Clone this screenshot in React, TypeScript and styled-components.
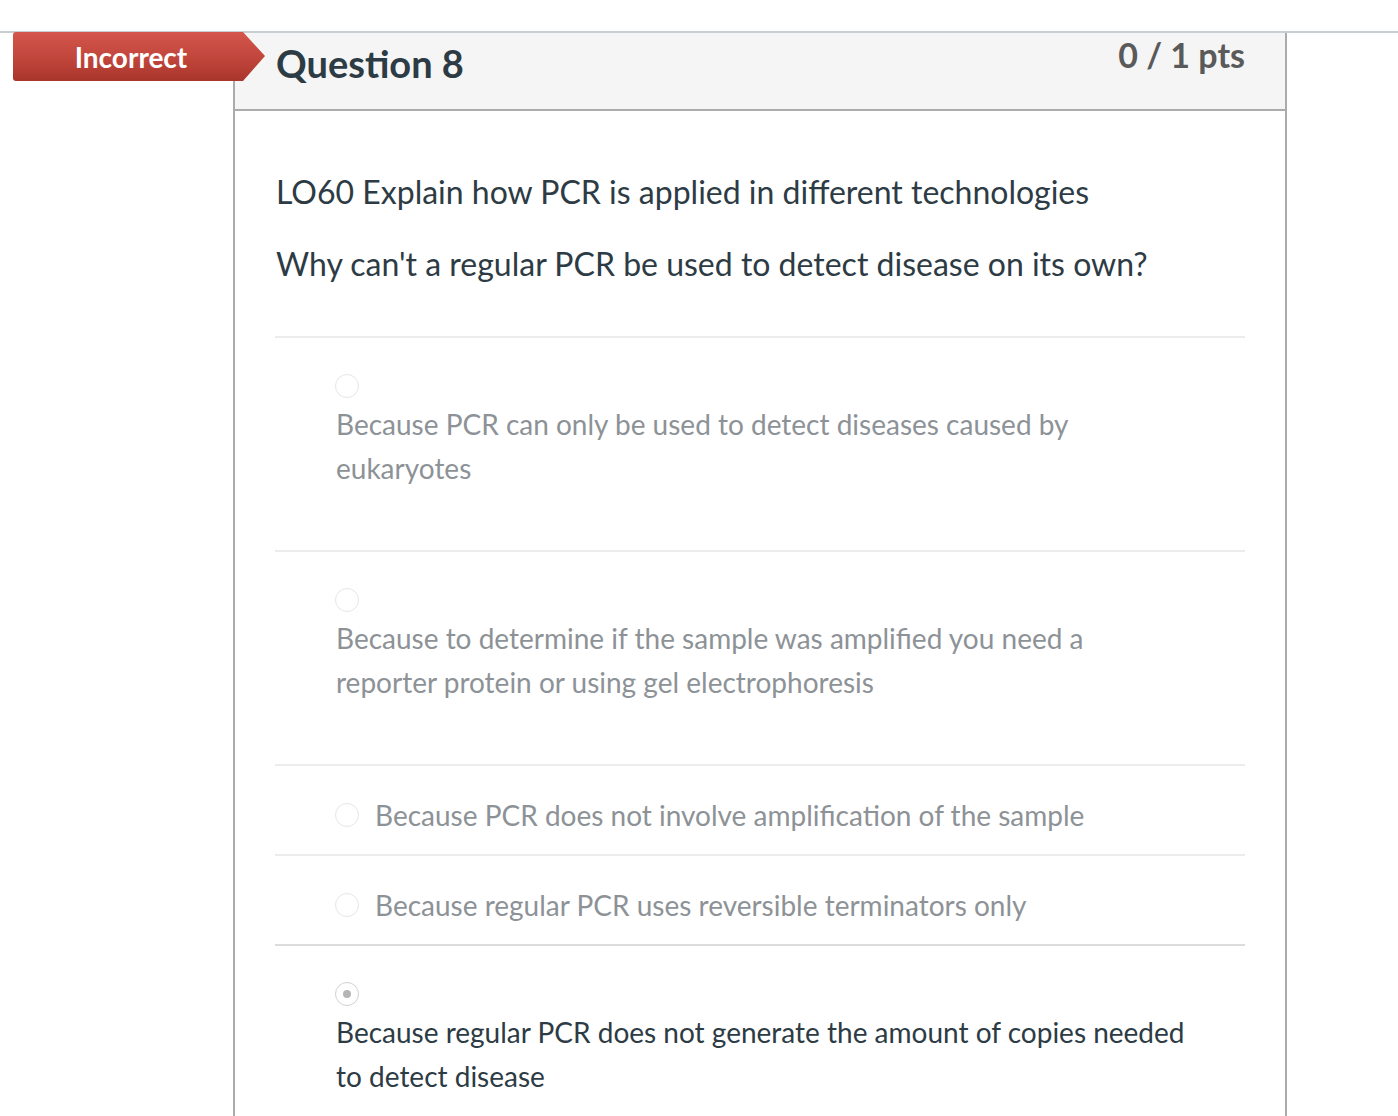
import React from "react";
import styled, { createGlobalStyle } from "styled-components";

const GlobalStyle = createGlobalStyle`
    html, body {
        margin: 0;
        padding: 0;
        background: #ffffff;
        font-family: Lato, "Open Sans", "Liberation Sans", sans-serif;
        overflow: hidden;
    }
`;

type Answer = {
    text: string;
    stacked: boolean;
    selected?: boolean;
    strong?: boolean;
};

const answers: Answer[] = [
    {
        text: "Because PCR can only be used to detect diseases caused by eukaryotes",
        stacked: true,
    },
    {
        text: "Because to determine if the sample was amplified you need a reporter protein or using gel electrophoresis",
        stacked: true,
    },
    { text: "Because PCR does not involve amplification of the sample", stacked: false },
    { text: "Because regular PCR uses reversible terminators only", stacked: false, strong: true },
    {
        text: "Because regular PCR does not generate the amount of copies needed to detect disease",
        stacked: true,
        selected: true,
    },
];

export default function App() {
    return (
        <>
            <GlobalStyle />
            <Page>
                <TopRule />
                <QuestionRow>
                    <Gutter>
                        <Badge>Incorrect</Badge>
                    </Gutter>
                    <Card>
                        <Header>
                            <Title>Question 8</Title>
                            <Points>0 / 1 pts</Points>
                        </Header>
                        <Body>
                            <Prompt>LO60 Explain how PCR is applied in different technologies</Prompt>
                            <Prompt>Why can't a regular PCR be used to detect disease on its own?</Prompt>
                            <AnswerList>
                                {answers.map((a, i) => (
                                    <AnswerItem key={i} $stacked={a.stacked} $strong={a.strong}>
                                        <Radio $selected={a.selected} />
                                        <AnswerText $stacked={a.stacked} $selected={a.selected}>
                                            {a.text}
                                        </AnswerText>
                                    </AnswerItem>
                                ))}
                            </AnswerList>
                        </Body>
                    </Card>
                </QuestionRow>
            </Page>
        </>
    );
}

const Page = styled.div`
    padding-top: 31px;
    min-height: 1116px;
    box-sizing: border-box;
`;

const TopRule = styled.div`
    height: 2px;
    background: #c9ced2;
`;

const QuestionRow = styled.div`
    display: flex;
    flex-direction: row;
`;

const Gutter = styled.div`
    position: relative;
    width: 233px;
    flex-shrink: 0;
`;

const Badge = styled.div`
    position: absolute;
    top: -1px;
    left: 13px;
    width: 252px;
    height: 49px;
    box-sizing: border-box;
    padding-right: 16px;
    display: flex;
    align-items: center;
    justify-content: center;
    color: #ffffff;
    font-size: 28px;
    font-weight: 700;
    background: linear-gradient(to bottom, #d4564d 0%, #c0453b 55%, #a9352c 100%);
    clip-path: polygon(0 0, 230px 0, 252px 24px, 230px 49px, 0 49px);
    border-radius: 3px 0 0 3px;
    z-index: 2;
`;

const Card = styled.div`
    width: 1054px;
    box-sizing: border-box;
    border-left: 2px solid #ababab;
    border-right: 2px solid #ababab;
    min-height: 1083px;
`;

const Header = styled.div`
    height: 76px;
    box-sizing: content-box;
    background: #f5f5f5;
    border-bottom: 2px solid #ababab;
    padding: 0 40px 0 41px;
    display: flex;
    justify-content: space-between;
    align-items: flex-start;
`;

const Title = styled.h2`
    margin: 0;
    padding-top: 7px;
    font-size: 38px;
    line-height: 46px;
    font-weight: 700;
    color: #2d3b45;
`;

const Points = styled.div`
    padding-top: 0;
    font-size: 34px;
    line-height: 44px;
    font-weight: 700;
    color: #5a5a5a;
`;

const Body = styled.div`
    padding: 59px 40px 0 40px;
`;

const Prompt = styled.p`
    margin: 0 0 28px 1px;
    font-size: 32px;
    line-height: 44px;
    color: #2d3b45;
`;

const AnswerList = styled.div`
    margin-top: 50px;
    border-top: 2px solid #ececec;
`;

const AnswerItem = styled.div<{ $stacked: boolean; $strong?: boolean }>`
    display: flex;
    flex-direction: ${(p) => (p.$stacked ? "column" : "row")};
    align-items: ${(p) => (p.$stacked ? "flex-start" : "center")};
    gap: ${(p) => (p.$stacked ? "4px" : "16px")};
    box-sizing: border-box;
    height: ${(p) => (p.$stacked ? "214px" : "90px")};
    padding: ${(p) => (p.$stacked ? "36px 0 0 60px" : "10px 60px 0 60px")};
    border-bottom: 2px solid ${(p) => (p.$strong ? "#dcdcdc" : "#ececec")};
    &:last-child {
        border-bottom: none;
    }
`;

const Radio = styled.span<{ $selected?: boolean }>`
    position: relative;
    width: 24px;
    height: 24px;
    flex-shrink: 0;
    box-sizing: border-box;
    border-radius: 50%;
    border: 1px solid ${(p) => (p.$selected ? "#d2d2d2" : "#e6e6e6")};
    background: #ffffff;
    &::after {
        content: "";
        display: ${(p) => (p.$selected ? "block" : "none")};
        position: absolute;
        left: 50%;
        top: 50%;
        width: 8px;
        height: 8px;
        margin: -4px 0 0 -4px;
        border-radius: 50%;
        background: #b5b5b5;
    }
`;

const AnswerText = styled.div<{ $stacked: boolean; $selected?: boolean }>`
    font-size: 28px;
    line-height: 44px;
    color: ${(p) => (p.$selected ? "#2d3b45" : "#8d9297")};
    margin-left: ${(p) => (p.$stacked ? "1px" : "0")};
    max-width: 852px;
`;
